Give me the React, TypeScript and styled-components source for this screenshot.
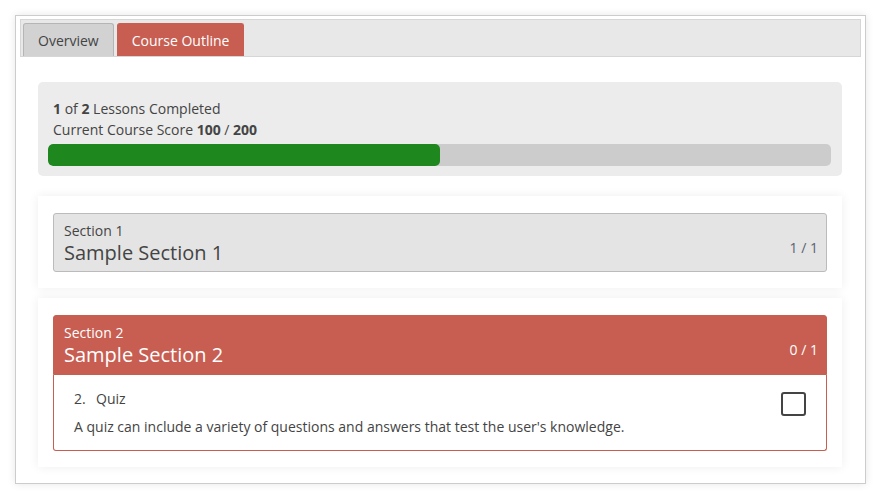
import React from 'react';
import styled, { createGlobalStyle } from 'styled-components';

const GlobalStyle = createGlobalStyle`
  body {
    margin: 0;
    padding: 15px;
    background: #ffffff;
    font-family: "Open Sans", "Liberation Sans", sans-serif;
    color: #444;
  }
`;

const Frame = styled.div`
  border: 1px solid #cccccc;
  box-shadow: 0 0 8px rgba(0, 0, 0, 0.1);
  background: #fff;
  padding: 3px 4px 4px;
`;

const TabBar = styled.div`
  display: flex;
  gap: 3px;
  align-items: flex-end;
  height: 38px;
  box-sizing: border-box;
  padding: 4px 2px 0;
  background: #e8e8e8;
  border: 1px solid #d6d6d6;
`;

const Tab = styled.div<{ active?: boolean }>`
  box-sizing: border-box;
  height: 33px;
  display: flex;
  align-items: center;
  padding: 1px 14px 0;
  font-size: 14px;
  border-radius: 3px 3px 0 0;
  border: 1px solid ${({ active }) => (active ? '#c75e51' : '#b5b5b5')};
  border-bottom: none;
  background: ${({ active }) => (active ? '#c75e51' : '#d2d2d2')};
  color: ${({ active }) => (active ? '#fff' : '#444')};
`;

const Content = styled.div`
  padding: 25px 19px 12px 18px;
  display: flex;
  flex-direction: column;
  gap: 10px;
`;

const ProgressPanel = styled.div`
  background: #ececec;
  border-radius: 5px;
  padding: 16px 11px 10px 10px;
  margin-bottom: 10px;
`;

const StatLine = styled.div`
  font-size: 14px;
  line-height: 21px;
  padding-left: 5px;
  color: #444;

  b {
    font-weight: 700;
  }
`;

const Track = styled.div`
  margin-top: 4px;
  height: 22px;
  border-radius: 5px;
  background: #cccccc;
  overflow: hidden;
`;

const Fill = styled.div`
  height: 100%;
  background: #1e881e;
  border-radius: 5px;
`;

const Card = styled.div`
  background: #fff;
  box-shadow: 0 0 10px rgba(0, 0, 0, 0.07);
  padding: 17px 15px 16px;
`;

const SectionHead = styled.div<{ open?: boolean }>`
  position: relative;
  box-sizing: border-box;
  height: ${({ open }) => (open ? '60px' : '59px')};
  padding: 7px 10px 0;
  border: 1px solid ${({ open }) => (open ? '#c75e51' : '#bbbbbb')};
  border-radius: ${({ open }) => (open ? '3px 3px 0 0' : '3px')};
  background: ${({ open }) => (open ? '#c75e51' : '#e4e4e4')};
  color: ${({ open }) => (open ? '#fff' : '#444')};
`;

const SectionLabel = styled.div`
  font-size: 14px;
  line-height: 20px;
`;

const SectionTitle = styled.div`
  font-size: 20px;
  line-height: 23px;
`;

const Count = styled.div<{ open?: boolean }>`
  position: absolute;
  right: 8px;
  bottom: ${({ open }) => (open ? '15px' : '14px')};
  font-size: 14px;
  font-weight: ${({ open }) => (open ? 500 : 400)};
  color: ${({ open }) => (open ? '#fff' : '#5a6272')};
`;

const LessonBody = styled.div`
  position: relative;
  border: 1px solid #c75e51;
  border-top: none;
  border-radius: 0 0 3px 3px;
  padding: 14px 20px 13px;
`;

const LessonName = styled.div`
  font-size: 14px;
  line-height: 20px;
  color: #444;

  span {
    display: inline-block;
    width: 22px;
  }
`;

const LessonDesc = styled.div`
  margin-top: 8px;
  font-size: 14px;
  line-height: 20px;
  color: #444;
`;

const Checkbox = styled.div`
  position: absolute;
  top: 17px;
  right: 20px;
  width: 25px;
  height: 24px;
  box-sizing: border-box;
  border: 2.5px solid #444;
  border-radius: 3px;
  background: #fff;
`;

export default function App() {
  const done = 1;
  const total = 2;
  return (
    <>
      <GlobalStyle />
      <Frame>
        <TabBar>
          <Tab>Overview</Tab>
          <Tab active>Course Outline</Tab>
        </TabBar>
        <Content>
          <ProgressPanel>
            <StatLine>
              <b>1</b> of <b>2</b> Lessons Completed
            </StatLine>
            <StatLine>
              Current Course Score <b>100</b> / <b>200</b>
            </StatLine>
            <Track>
              <Fill style={{ width: `${(done / total) * 100}%` }} />
            </Track>
          </ProgressPanel>

          <Card>
            <SectionHead>
              <SectionLabel>Section 1</SectionLabel>
              <SectionTitle>Sample Section 1</SectionTitle>
              <Count>1 / 1</Count>
            </SectionHead>
          </Card>

          <Card>
            <SectionHead open>
              <SectionLabel>Section 2</SectionLabel>
              <SectionTitle>Sample Section 2</SectionTitle>
              <Count open>0 / 1</Count>
            </SectionHead>
            <LessonBody>
              <LessonName>
                <span>2.</span>Quiz
              </LessonName>
              <LessonDesc>
                A quiz can include a variety of questions and answers that test the user's knowledge.
              </LessonDesc>
              <Checkbox />
            </LessonBody>
          </Card>
        </Content>
      </Frame>
    </>
  );
}
